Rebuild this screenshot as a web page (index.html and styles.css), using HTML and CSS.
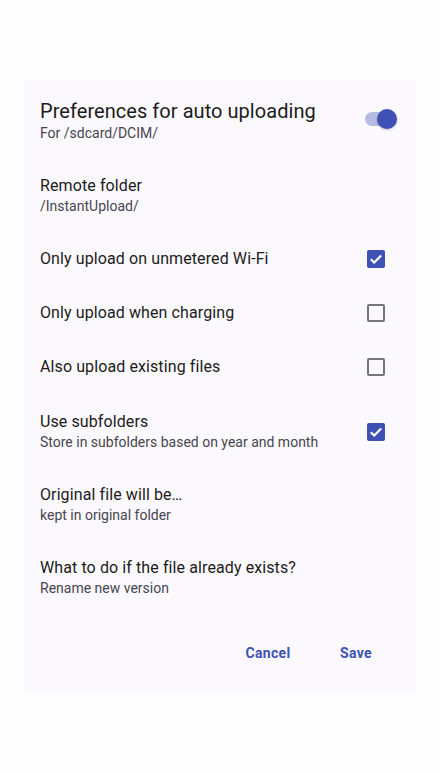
FILE: index.html
```html
<!DOCTYPE html>
<html>
<head>
<meta charset="utf-8">
<link rel="stylesheet" href="styles.css">
</head>
<body>
<div class="dialog">
  <div class="header">
    <div class="text">
      <div class="h-title">Preferences for auto uploading</div>
      <div class="summary">For /sdcard/DCIM/</div>
    </div>
    <div class="switch on"><span class="track"></span><span class="thumb"></span></div>
  </div>

  <div class="row two first">
    <div class="text">
      <div class="title">Remote folder</div>
      <div class="summary">/InstantUpload/</div>
    </div>
  </div>

  <div class="row one">
    <div class="text"><div class="title">Only upload on unmetered Wi-Fi</div></div>
    <div class="check on"><svg viewBox="0 0 18 18" width="18" height="18"><path d="M3.8 9.2l3.4 3.3 7-7" fill="none" stroke="#fff" stroke-width="2.2"/></svg></div>
  </div>

  <div class="row one">
    <div class="text"><div class="title">Only upload when charging</div></div>
    <div class="check"></div>
  </div>

  <div class="row one">
    <div class="text"><div class="title">Also upload existing files</div></div>
    <div class="check"></div>
  </div>

  <div class="row two tall">
    <div class="text">
      <div class="title">Use subfolders</div>
      <div class="summary">Store in subfolders based on year and month</div>
    </div>
    <div class="check on"><svg viewBox="0 0 18 18" width="18" height="18"><path d="M3.8 9.2l3.4 3.3 7-7" fill="none" stroke="#fff" stroke-width="2.2"/></svg></div>
  </div>

  <div class="row two">
    <div class="text">
      <div class="title">Original file will be…</div>
      <div class="summary">kept in original folder</div>
    </div>
  </div>

  <div class="row two">
    <div class="text">
      <div class="title">What to do if the file already exists?</div>
      <div class="summary">Rename new version</div>
    </div>
  </div>

  <div class="actions">
    <button class="btn">Cancel</button>
    <button class="btn">Save</button>
  </div>
</div>
</body>
</html>
```

FILE: styles.css
```css
html, body {
  margin: 0;
  padding: 0;
  background: #fefefe;
  font-family: Roboto, "Noto Sans", "Liberation Sans", sans-serif;
}

.dialog {
  margin: 80px 24px 0 24px;
  width: 392px;
  height: 613px;
  background: #fbf9fd;
  box-sizing: border-box;
  display: flex;
  flex-direction: column;
}

.header {
  display: flex;
  align-items: center;
  padding: 19px 19px 17px 16px;
  height: 80px;
  box-sizing: border-box;
}

.text {
  flex: 1;
  min-width: 0;
}

.h-title {
  font-size: 20px;
  line-height: 24px;
  color: #1d1b20;
  letter-spacing: 0.05px;
}

.title {
  font-size: 16px;
  line-height: 20px;
  color: #1d1b20;
  letter-spacing: 0.1px;
}

.summary {
  font-size: 14px;
  line-height: 20px;
  color: #49454f;
  letter-spacing: 0;
}

.row {
  display: flex;
  align-items: center;
  padding: 0 31px 0 16px;
  box-sizing: border-box;
}

.row.two { height: 73px; }
.row.two.first { height: 72px; padding-bottom: 1px; }
.row.two.tall { height: 74px; padding-top: 1px; }
.row.one { height: 54px; }

.switch {
  position: relative;
  width: 32px;
  height: 20px;
  margin-top: -5px;
}

.switch .track {
  position: absolute;
  left: 0;
  top: 3px;
  width: 28px;
  height: 14px;
  border-radius: 7px;
  background: #b6bbe4;
}

.switch .thumb {
  position: absolute;
  right: 0;
  top: 0;
  width: 20px;
  height: 20px;
  border-radius: 50%;
  background: #3f51b5;
  box-shadow: 0 1px 2px rgba(0,0,0,0.25);
}

.check {
  width: 18px;
  height: 18px;
  box-sizing: border-box;
  border: 2px solid #767676;
  border-radius: 2px;
  display: flex;
}

.check.on {
  border: none;
  background: #3f51b5;
}

.actions {
  display: flex;
  justify-content: flex-end;
  gap: 24px;
  padding: 21px 28px 0 0;
}

.btn {
  min-width: 64px;
  height: 36px;
  padding: 0 8px;
  border: none;
  background: transparent;
  font-family: Roboto, "Noto Sans", "Liberation Sans", sans-serif;
  font-size: 14px;
  font-weight: 700;
  color: #3f51b5;
  letter-spacing: 0.3px;
}
```
